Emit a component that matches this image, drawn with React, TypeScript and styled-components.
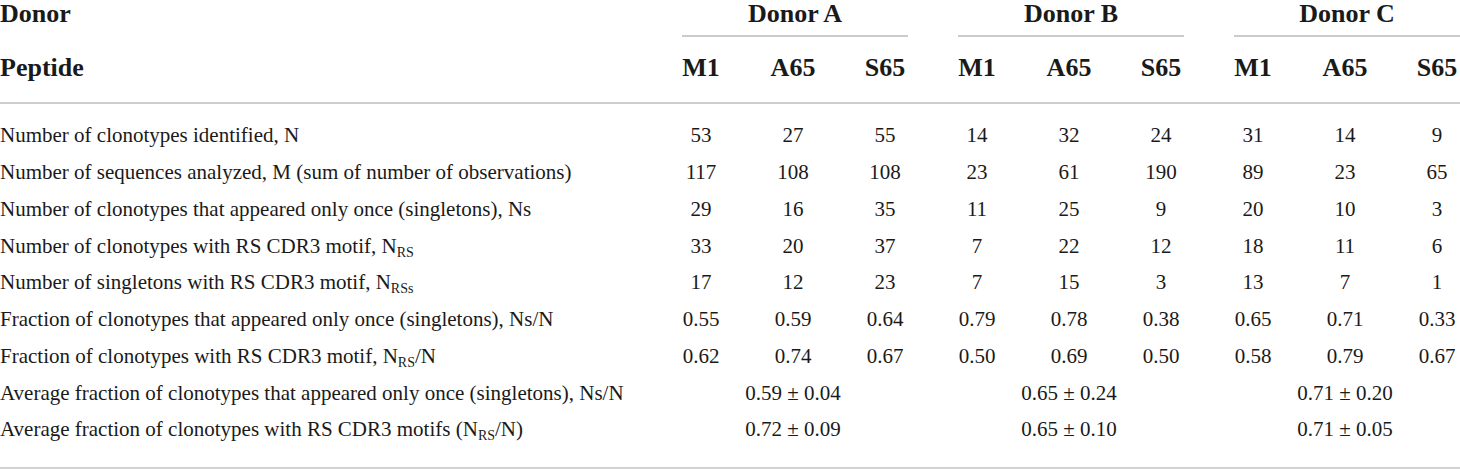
import React from "react";
import styled, { createGlobalStyle } from "styled-components";

const GlobalStyle = createGlobalStyle`
  html, body {
    margin: 0;
    padding: 0;
    background: #ffffff;
  }
  body {
    font-family: "Liberation Serif", "Times New Roman", serif;
    color: #1a1a1a;
  }
`;

const gridCols = `632px repeat(9, 92px)`;

const Table = styled.div`
  width: 1460px;
  border-bottom: 2px solid #d2d2d2;
`;

const Head = styled.div`
  border-bottom: 2px solid #cdcdcd;
`;

const DonorRow = styled.div`
  display: grid;
  grid-template-columns: ${gridCols};
  height: 38px;
`;

const PeptideRow = styled.div`
  display: grid;
  grid-template-columns: ${gridCols};
  height: 64px;
  padding-bottom: 4px;
  box-sizing: border-box;
  align-items: center;
`;

const HeadLabel = styled.div`
  font-weight: 700;
  font-size: 26px;
  line-height: 28px;
`;

const GroupCell = styled.div`
  grid-column: span 3;
  padding-left: 50px;
  display: flex;
`;

const GroupTitle = styled.div`
  flex: 1;
  text-align: center;
  font-weight: 700;
  font-size: 26px;
  line-height: 28px;
  border-bottom: 2px solid #cbcbcb;
  height: 37px;
  box-sizing: border-box;
`;

const HeadCell = styled.div`
  padding-left: 46px;
  display: flex;
  justify-content: center;
  font-weight: 700;
  font-size: 26px;
  line-height: 28px;
  white-space: nowrap;
`;

const Body = styled.div`
  padding: 13px 0 19px;
`;

const BodyRow = styled.div`
  display: grid;
  grid-template-columns: ${gridCols};
  height: 36.75px;
  align-items: center;
  font-size: 21px;
  line-height: 24px;
`;

const Label = styled.div`
  white-space: nowrap;
`;

const Cell = styled.div`
  padding-left: 46px;
  display: flex;
  justify-content: center;
  white-space: nowrap;
`;

const Sub = styled.sub`
  font-size: 14px;
  vertical-align: -4px;
  line-height: 0;
`;

const groups = ["Donor A", "Donor B", "Donor C"];
const peptides = ["M1", "A65", "S65"];

type Row = {
  label: React.ReactNode;
  values?: string[];
  averages?: string[];
};

const rows: Row[] = [
  {
    label: "Number of clonotypes identified, N",
    values: ["53", "27", "55", "14", "32", "24", "31", "14", "9"],
  },
  {
    label: "Number of sequences analyzed, M (sum of number of observations)",
    values: ["117", "108", "108", "23", "61", "190", "89", "23", "65"],
  },
  {
    label: "Number of clonotypes that appeared only once (singletons), Ns",
    values: ["29", "16", "35", "11", "25", "9", "20", "10", "3"],
  },
  {
    label: (
      <>
        Number of clonotypes with RS CDR3 motif, N<Sub>RS</Sub>
      </>
    ),
    values: ["33", "20", "37", "7", "22", "12", "18", "11", "6"],
  },
  {
    label: (
      <>
        Number of singletons with RS CDR3 motif, N<Sub>RSs</Sub>
      </>
    ),
    values: ["17", "12", "23", "7", "15", "3", "13", "7", "1"],
  },
  {
    label: "Fraction of clonotypes that appeared only once (singletons), Ns/N",
    values: ["0.55", "0.59", "0.64", "0.79", "0.78", "0.38", "0.65", "0.71", "0.33"],
  },
  {
    label: (
      <>
        Fraction of clonotypes with RS CDR3 motif, N<Sub>RS</Sub>/N
      </>
    ),
    values: ["0.62", "0.74", "0.67", "0.50", "0.69", "0.50", "0.58", "0.79", "0.67"],
  },
  {
    label: "Average fraction of clonotypes that appeared only once (singletons), Ns/N",
    averages: ["0.59 ± 0.04", "0.65 ± 0.24", "0.71 ± 0.20"],
  },
  {
    label: (
      <>
        Average fraction of clonotypes with RS CDR3 motifs (N<Sub>RS</Sub>/N)
      </>
    ),
    averages: ["0.72 ± 0.09", "0.65 ± 0.10", "0.71 ± 0.05"],
  },
];

function App() {
  return (
    <>
      <GlobalStyle />
      <Table>
        <Head>
          <DonorRow>
            <HeadLabel>Donor</HeadLabel>
            {groups.map((g) => (
              <GroupCell key={g}>
                <GroupTitle>{g}</GroupTitle>
              </GroupCell>
            ))}
          </DonorRow>
          <PeptideRow>
            <HeadLabel>Peptide</HeadLabel>
            {groups.map((g) =>
              peptides.map((p) => <HeadCell key={g + p}>{p}</HeadCell>)
            )}
          </PeptideRow>
        </Head>
        <Body>
          {rows.map((row, i) => (
            <BodyRow key={i}>
              <Label>{row.label}</Label>
              {row.values &&
                row.values.map((v, j) => <Cell key={j}>{v}</Cell>)}
              {row.averages &&
                row.averages.map((a, j) => (
                  <React.Fragment key={j}>
                    <Cell />
                    <Cell>{a}</Cell>
                    <Cell />
                  </React.Fragment>
                ))}
            </BodyRow>
          ))}
        </Body>
      </Table>
    </>
  );
}

export default App;
